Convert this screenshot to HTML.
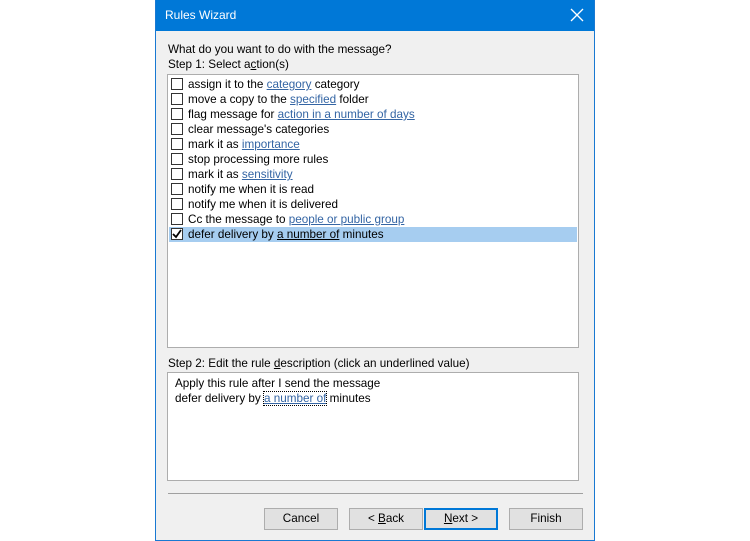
<!DOCTYPE html>
<html><head><style>
*{margin:0;padding:0;box-sizing:border-box}
body{width:750px;height:541px;background:#fff;position:relative;font-family:"Liberation Sans",sans-serif;font-size:11.7px;color:#000;overflow:hidden}
.win{position:absolute;left:155px;top:0;width:440px;height:541px;background:#f0f0f0;border:1px solid #1979d2;border-top:none}
.title{position:absolute;left:0;top:0;width:438px;height:31px;background:#0078d7;color:#fff;font-size:12px}
.title span{position:absolute;left:9px;top:8px}
.x{position:absolute;right:10px;top:8px}
.t{position:absolute;white-space:nowrap}
.box{position:absolute;background:#fff;border:1px solid #adadad}
.row{position:absolute;left:1px;width:408px;height:15px;white-space:nowrap}
.row .cb{position:absolute;left:2px;top:1px;width:12px;height:12px;border:1px solid #333;background:#fff}
.row .tx{position:absolute;left:19px;top:1px}
.sel{background:#a6cdf0}
a{color:#3465a4;text-decoration:underline}
.btn{position:absolute;top:508px;width:74px;height:22px;background:#e1e1e1;border:1px solid #adadad;text-align:center;line-height:20px;font-size:11.7px}
</style></head><body>
<div class="win">
<div class="title"><span>Rules Wizard</span>
<svg class="x" width="14" height="14" viewBox="0 0 14 14"><path d="M1 1L13 13M13 1L1 13" stroke="#fff" stroke-width="1.3"/></svg></div>
<div class="t" style="left:12px;top:43px">What do you want to do with the message?</div>
<div class="t" style="left:12px;top:58px">Step 1: Select a<u>c</u>tion(s)</div>
<div class="box" style="left:11px;top:74px;width:412px;height:274px">
<div class="row" style="top:2px"><div class="cb"></div><div class="tx">assign it to the <a>category</a> category</div></div>
<div class="row" style="top:17px"><div class="cb"></div><div class="tx">move a copy to the <a>specified</a> folder</div></div>
<div class="row" style="top:32px"><div class="cb"></div><div class="tx">flag message for <a>action in a number of days</a></div></div>
<div class="row" style="top:47px"><div class="cb"></div><div class="tx">clear message's categories</div></div>
<div class="row" style="top:62px"><div class="cb"></div><div class="tx">mark it as <a>importance</a></div></div>
<div class="row" style="top:77px"><div class="cb"></div><div class="tx">stop processing more rules</div></div>
<div class="row" style="top:92px"><div class="cb"></div><div class="tx">mark it as <a>sensitivity</a></div></div>
<div class="row" style="top:107px"><div class="cb"></div><div class="tx">notify me when it is read</div></div>
<div class="row" style="top:122px"><div class="cb"></div><div class="tx">notify me when it is delivered</div></div>
<div class="row" style="top:137px"><div class="cb"></div><div class="tx">Cc the message to <a>people or public group</a></div></div>
<div class="row sel" style="top:152px"><div class="cb"><svg width="10" height="10" viewBox="0 0 10 10" style="position:absolute;left:0;top:0"><path d="M1 5L4 8L9 1" stroke="#000" stroke-width="1.8" fill="none"/></svg></div><div class="tx">defer delivery by <u>a number of</u> minutes</div></div>
</div>
<div class="t" style="left:12px;top:357px">Step 2: Edit the rule <u>d</u>escription (click an underlined value)</div>
<div class="box" style="left:11px;top:372px;width:412px;height:109px">
<div class="t" style="left:7px;top:4px">Apply this rule after I send the message</div>
<div class="t" style="left:7px;top:19px">defer delivery by <a style="outline:1px dotted #000">a number of</a> minutes</div>
</div>
<div style="position:absolute;left:12px;top:493px;width:415px;height:1px;background:#a0a0a0"></div>
<div class="btn" style="left:108px">Cancel</div>
<div class="btn" style="left:193px">&lt; <u>B</u>ack</div>
<div class="btn" style="left:268px;border:2px solid #0078d7;line-height:18px"><u>N</u>ext &gt;</div>
<div class="btn" style="left:353px">Finish</div>
</div>
</body></html>
